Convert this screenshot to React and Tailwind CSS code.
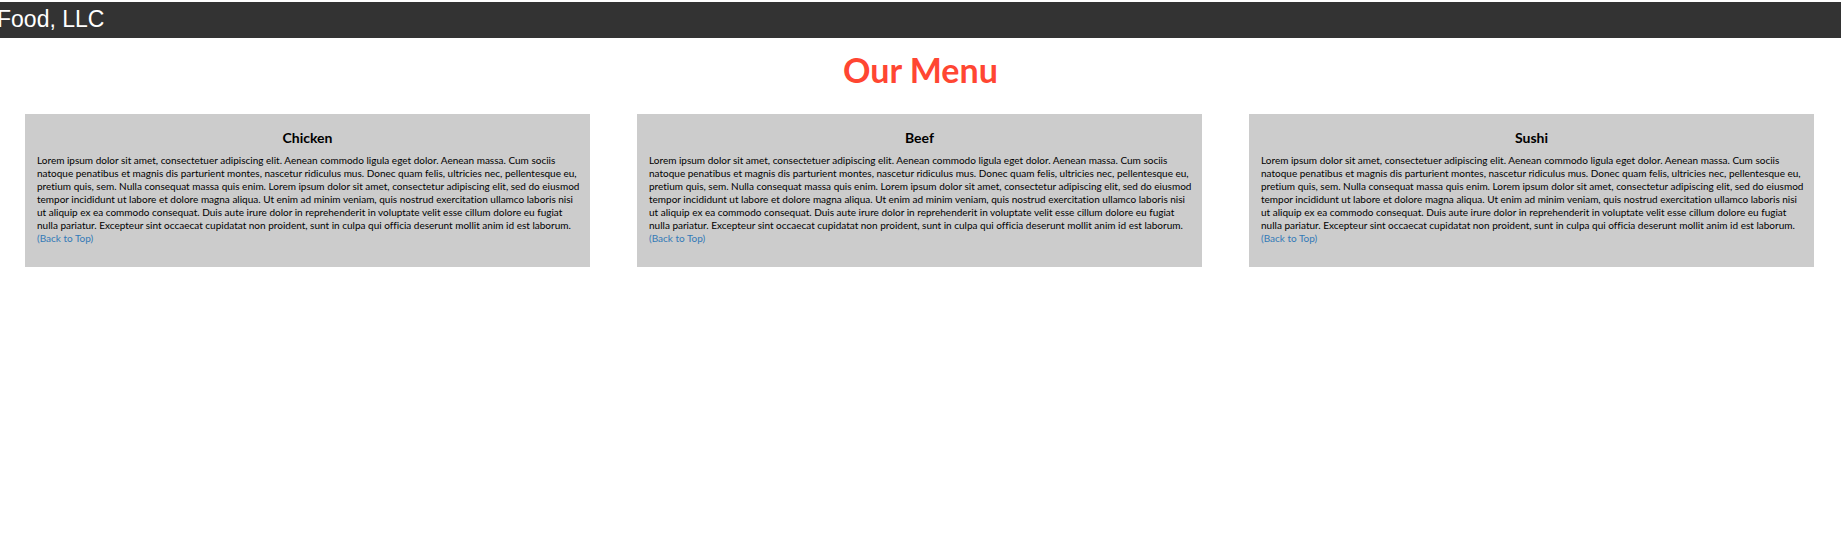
import { Fragment } from 'react';

const dishes = ['Chicken', 'Beef', 'Sushi'];

const description = [
  'Lorem ipsum dolor sit amet, consectetuer adipiscing elit. Aenean commodo ligula eget dolor. Aenean massa. Cum sociis',
  'natoque penatibus et magnis dis parturient montes, nascetur ridiculus mus. Donec quam felis, ultricies nec, pellentesque eu,',
  'pretium quis, sem. Nulla consequat massa quis enim. Lorem ipsum dolor sit amet, consectetur adipiscing elit, sed do eiusmod',
  'tempor incididunt ut labore et dolore magna aliqua. Ut enim ad minim veniam, quis nostrud exercitation ullamco laboris nisi',
  'ut aliquip ex ea commodo consequat. Duis aute irure dolor in reprehenderit in voluptate velit esse cillum dolore eu fugiat',
  'nulla pariatur. Excepteur sint occaecat cupidatat non proident, sunt in culpa qui officia deserunt mollit anim id est laborum.',
];

function MenuCard({ name }) {
  return (
    <section className="bg-[#cccccc] px-2 pt-4 pb-[22px] text-black">
      <h2 className="text-center text-[14px] leading-4 font-bold">{name}</h2>
      <p className="mt-2 pl-1 text-[10px] leading-[13px]">
        {description.map((line) => (
          <Fragment key={line}>
            {line}
            <br />
          </Fragment>
        ))}
        <a href="#top" className="text-[#337ab7] hover:underline">
          (Back to Top)
        </a>
      </p>
    </section>
  );
}

export default function App() {
  return (
    <div
      id="top"
      className="min-h-screen overflow-x-hidden bg-white pt-0.5 font-['Comic_Sans_MS','Lato',sans-serif] [font-variant-ligatures:none]"
    >
      <header className="bg-[#333333] pt-[3px] pb-[5px]">
        <a
          href="#top"
          className="-ml-[3px] block font-['Liberation_Sans',Arial,sans-serif] text-[23px] leading-7 text-white"
        >
          Food, LLC
        </a>
      </header>
      <main>
        <h1 className="pt-3 pb-6 text-center text-[34px] leading-10 font-bold text-[#ff4632]">
          Our Menu
        </h1>
        <div className="grid grid-cols-3 gap-[47px] pr-[27px] pl-[25px]">
          {dishes.map((name) => (
            <MenuCard key={name} name={name} />
          ))}
        </div>
      </main>
    </div>
  );
}
